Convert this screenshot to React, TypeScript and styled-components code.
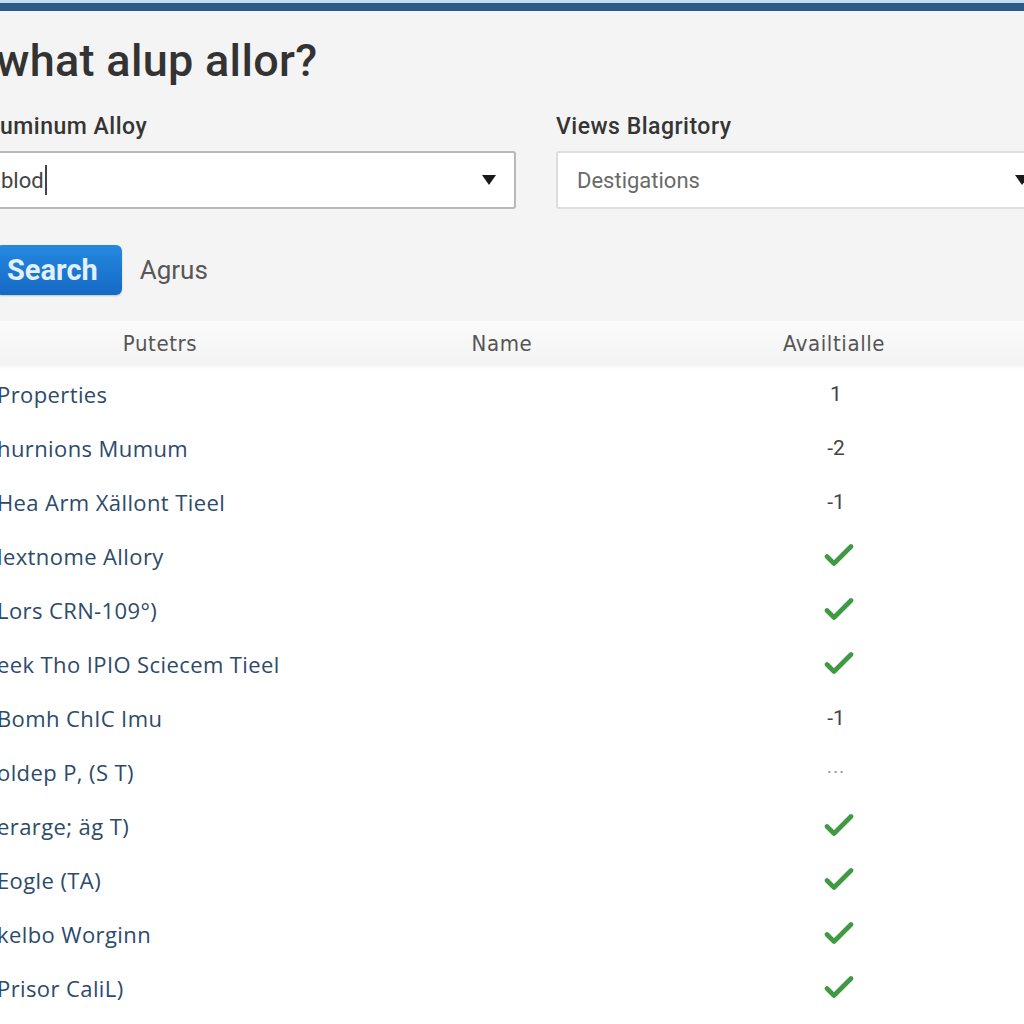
import React from "react";
import styled, { createGlobalStyle } from "styled-components";

const GlobalStyle = createGlobalStyle`
  html, body {
    margin: 0;
    padding: 0;
    background: #f4f4f4;
    overflow: hidden;
    font-family: Roboto, "Liberation Sans", Arial, sans-serif;
  }
`;

const TopBar = styled.div`
  height: 11px;
  background: linear-gradient(#c3dbf1 0 3px, #2b5a86 3px 11px);
`;

const Page = styled.main`
  width: 1060px;
  margin-left: -4px;
  display: flex;
  flex-direction: column;
`;

const Title = styled.h1`
  margin: 25px 0 0;
  font-family: Roboto, sans-serif;
  font-weight: 500;
  font-size: 45px;
  line-height: 50px;
  color: #333;
  letter-spacing: 0.3px;
`;

const FieldRow = styled.div`
  display: grid;
  grid-template-columns: 520px 493px;
  column-gap: 40px;
  margin-top: 28px;
`;

const Field = styled.div`
  display: flex;
  flex-direction: column;
  gap: 11px;
`;

const Label = styled.label<{ $indent?: number }>`
  font-family: Roboto, sans-serif;
  font-weight: 500;
  font-size: 23px;
  line-height: 26px;
  letter-spacing: 0.5px;
  color: #353535;
  padding-left: ${(p) => p.$indent ?? 0}px;
`;

const SelectBox = styled.div<{ $pad: number; $strong?: boolean }>`
  height: 58px;
  box-sizing: border-box;
  display: flex;
  align-items: center;
  justify-content: space-between;
  padding: 0 18px 0 ${(p) => p.$pad}px;
  background: #fff;
  border: ${(p) => (p.$strong ? "2px solid #b9b9b9" : "2px solid #dedede")};
  border-radius: 3px;
  font-family: Roboto, sans-serif;
  font-size: 22px;
  color: ${(p) => (p.$strong ? "#444" : "#6a6a6a")};
`;

const Typed = styled.span`
  display: inline-flex;
  align-items: center;
`;

const Caret = styled.span`
  display: inline-block;
  width: 2px;
  height: 30px;
  margin-left: 1px;
  background: #444;
`;

const Arrow = styled.svg`
  flex: none;
  width: 14px;
  height: 10px;
`;

const Actions = styled.div`
  display: flex;
  align-items: center;
  gap: 18px;
  margin-top: 36px;
`;

const SearchButton = styled.button`
  height: 50px;
  padding: 0 24px 0 11px;
  border: none;
  border-radius: 6px;
  background: linear-gradient(#2589e0, #1569c4);
  box-shadow: 0 1px 2px rgba(0, 0, 0, 0.2);
  color: #e2f0ff;
  font-family: Roboto, sans-serif;
  font-weight: 700;
  font-size: 29px;
  cursor: pointer;
`;

const SecondaryText = styled.span`
  font-family: Roboto, sans-serif;
  font-size: 26px;
  color: #585858;
`;

const Table = styled.section`
  margin-top: 26px;
  padding-bottom: 20px;
  background: #fff;
  display: flex;
  flex-direction: column;
`;

const cols = "328px 356px 308px 1fr";

const HeaderRow = styled.div`
  display: grid;
  grid-template-columns: ${cols};
  height: 44px;
  margin-bottom: 2px;
  align-items: center;
  background: linear-gradient(#fbfbfb, #f3f3f3);
  box-shadow: 0 2px 3px rgba(0, 0, 0, 0.05);
`;

const HeaderCell = styled.div`
  text-align: center;
  font-family: "DejaVu Sans Condensed", "DejaVu Sans", sans-serif;
  font-size: 22px;
  letter-spacing: 0.6px;
  color: #555;
`;

const Row = styled.div`
  display: grid;
  grid-template-columns: ${cols};
  height: 54px;
  align-items: center;
`;

const NameCell = styled.div`
  font-family: "Open Sans", "Liberation Sans", Arial, sans-serif;
  font-size: 22px;
  letter-spacing: 0.4px;
  color: #2d4a6b;
  white-space: nowrap;
  padding-left: 1px;
`;

const ValueCell = styled.div<{ $muted?: boolean }>`
  display: flex;
  justify-content: center;
  align-items: center;
  padding-left: 4px;
  font-family: Roboto, sans-serif;
  font-size: ${(p) => (p.$muted ? "20px" : "21px")};
  letter-spacing: ${(p) => (p.$muted ? "1px" : "0")};
  color: ${(p) => (p.$muted ? "#9a9a9a" : "#444")};
`;

const CheckIcon = styled.svg`
  width: 30px;
  height: 26px;
  margin-left: 6px;
`;

const Check = () => (
  <CheckIcon viewBox="0 0 30 26" fill="none">
    <path
      d="M3 13.5 L10 20.5 L27 3.5"
      stroke="#3f9a41"
      strokeWidth="4.6"
      strokeLinecap="round"
      strokeLinejoin="round"
    />
  </CheckIcon>
);

const Triangle = () => (
  <Arrow viewBox="0 0 14 10">
    <polygon points="0,0 14,0 7,10" fill="#1a1a1a" />
  </Arrow>
);

type Val = string | "check";

const rows: { name: string; value: Val }[] = [
  { name: "Properties", value: "1" },
  { name: "hurnions Mumum", value: "-2" },
  { name: "Hea Arm Xällont Tieel", value: "-1" },
  { name: "lextnome Allory", value: "check" },
  { name: "Lors CRN-109°)", value: "check" },
  { name: "eek Tho IPIO Sciecem Tieel", value: "check" },
  { name: "Bomh ChIC Imu", value: "-1" },
  { name: "oldep P, (S T)", value: "···" },
  { name: "erarge; äg T)", value: "check" },
  { name: "Eogle (TA)", value: "check" },
  { name: "kelbo Worginn", value: "check" },
  { name: "Prisor CaliL)", value: "check" },
];

export default function App() {
  return (
    <>
      <GlobalStyle />
      <TopBar />
      <Page>
        <Title>what alup allor?</Title>
        <FieldRow>
          <Field>
            <Label $indent={4}>uminum Alloy</Label>
            <SelectBox $pad={3} $strong>
              <Typed>
                blod
                <Caret />
              </Typed>
              <Triangle />
            </SelectBox>
          </Field>
          <Field>
            <Label>Views Blagritory</Label>
            <SelectBox $pad={19}>
              <span>Destigations</span>
              <Triangle />
            </SelectBox>
          </Field>
        </FieldRow>
        <Actions>
          <SearchButton>Search</SearchButton>
          <SecondaryText>Agrus</SecondaryText>
        </Actions>
        <Table>
          <HeaderRow>
            <HeaderCell>Putetrs</HeaderCell>
            <HeaderCell>Name</HeaderCell>
            <HeaderCell>Availtialle</HeaderCell>
            <span />
          </HeaderRow>
          {rows.map((r) => (
            <Row key={r.name}>
              <NameCell>{r.name}</NameCell>
              <span />
              {r.value === "check" ? (
                <ValueCell>
                  <Check />
                </ValueCell>
              ) : (
                <ValueCell $muted={r.value === "···"}>{r.value}</ValueCell>
              )}
              <span />
            </Row>
          ))}
        </Table>
      </Page>
    </>
  );
}
